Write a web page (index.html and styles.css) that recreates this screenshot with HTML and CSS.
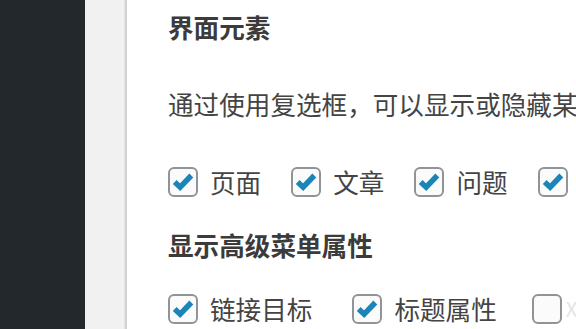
FILE: index.html
```html
<!DOCTYPE html>
<html lang="zh-CN">
<head>
<meta charset="utf-8">
<title>显示选项</title>
<link rel="stylesheet" href="styles.css">
</head>
<body>
<div class="layout">
  <div class="sidebar"></div>
  <div class="gutter"></div>
  <div class="panel">
    <h5 class="title">界面元素</h5>
    <p class="desc">通过使用复选框，可以显示或隐藏某些界面元素。</p>
    <div class="row row-1">
      <label class="opt"><span class="box checked"><svg viewBox="0 0 20 20"><path d="M3.6 10 L7.8 14 L16.4 5" /></svg></span><span class="txt">页面</span></label>
      <label class="opt"><span class="box checked"><svg viewBox="0 0 20 20"><path d="M3.6 10 L7.8 14 L16.4 5" /></svg></span><span class="txt">文章</span></label>
      <label class="opt"><span class="box checked"><svg viewBox="0 0 20 20"><path d="M3.6 10 L7.8 14 L16.4 5" /></svg></span><span class="txt">问题</span></label>
      <label class="opt"><span class="box checked"><svg viewBox="0 0 20 20"><path d="M3.6 10 L7.8 14 L16.4 5" /></svg></span><span class="txt">分类</span></label>
    </div>
    <h5 class="title">显示高级菜单属性</h5>
    <div class="row row-2">
      <label class="opt wide"><span class="box checked"><svg viewBox="0 0 20 20"><path d="M3.6 10 L7.8 14 L16.4 5" /></svg></span><span class="txt">链接目标</span></label>
      <label class="opt wide2"><span class="box checked"><svg viewBox="0 0 20 20"><path d="M3.6 10 L7.8 14 L16.4 5" /></svg></span><span class="txt">标题属性</span></label>
      <label class="opt"><span class="box tight"></span><span class="txt faint">XFN</span></label>
    </div>
  </div>
</div>
</body>
</html>
```

FILE: styles.css
```css
html, body {
  margin: 0;
  padding: 0;
  width: 576px;
  height: 329px;
  overflow: hidden;
  background: #fff;
}
.layout {
  display: flex;
  height: 329px;
  font-family: "Noto Sans CJK SC", "Noto Sans", sans-serif;
}
.sidebar {
  width: 85px;
  flex: none;
  background: #23282d;
}
.gutter {
  width: 40px;
  flex: none;
  background: #f1f1f1;
  border-right: 1px solid #e6e6e6;
  box-sizing: border-box;
}
.panel {
  flex: 1;
  min-width: 0;
  overflow: hidden;
  border-left: 2px solid #d2d2d2;
  background: #fff;
  padding: 9px 0 0 41px;
  white-space: nowrap;
  color: #444;
  font-size: 25.6px;
  line-height: 36px;
}
.title {
  margin: 0;
  font-size: 25.6px;
  font-weight: 700;
  color: #3b3b3b;
  height: 36px;
}
.desc {
  margin: 41px 0 0 0;
  height: 36px;
}
.row {
  display: flex;
  align-items: center;
  height: 36px;
}
.row-1 {
  margin: 42px 0 27px 0;
}
.row-2 {
  margin-top: 28px;
}
.opt {
  display: flex;
  align-items: center;
  flex: none;
  margin-right: 30px;
}
.opt.wide {
  margin-right: 40px;
}
.opt.wide2 {
  margin-right: 35px;
}
.box {
  width: 30px;
  height: 30px;
  box-sizing: border-box;
  border: 2px solid #8f9499;
  border-radius: 6px;
  background: #fbfbfb;
  display: flex;
  align-items: center;
  justify-content: center;
  flex: none;
  margin-right: 12px;
}
.box.tight {
  margin-right: 4px;
}
.box svg {
  width: 26px;
  height: 26px;
}
.box svg path {
  fill: none;
  stroke: #1b85b8;
  stroke-width: 4.2;
  stroke-linecap: butt;
  stroke-linejoin: miter;
}
.txt {
  color: #444;
}
.txt.faint {
  color: #e4e4e4;
  font-size: 20px;
}
```
